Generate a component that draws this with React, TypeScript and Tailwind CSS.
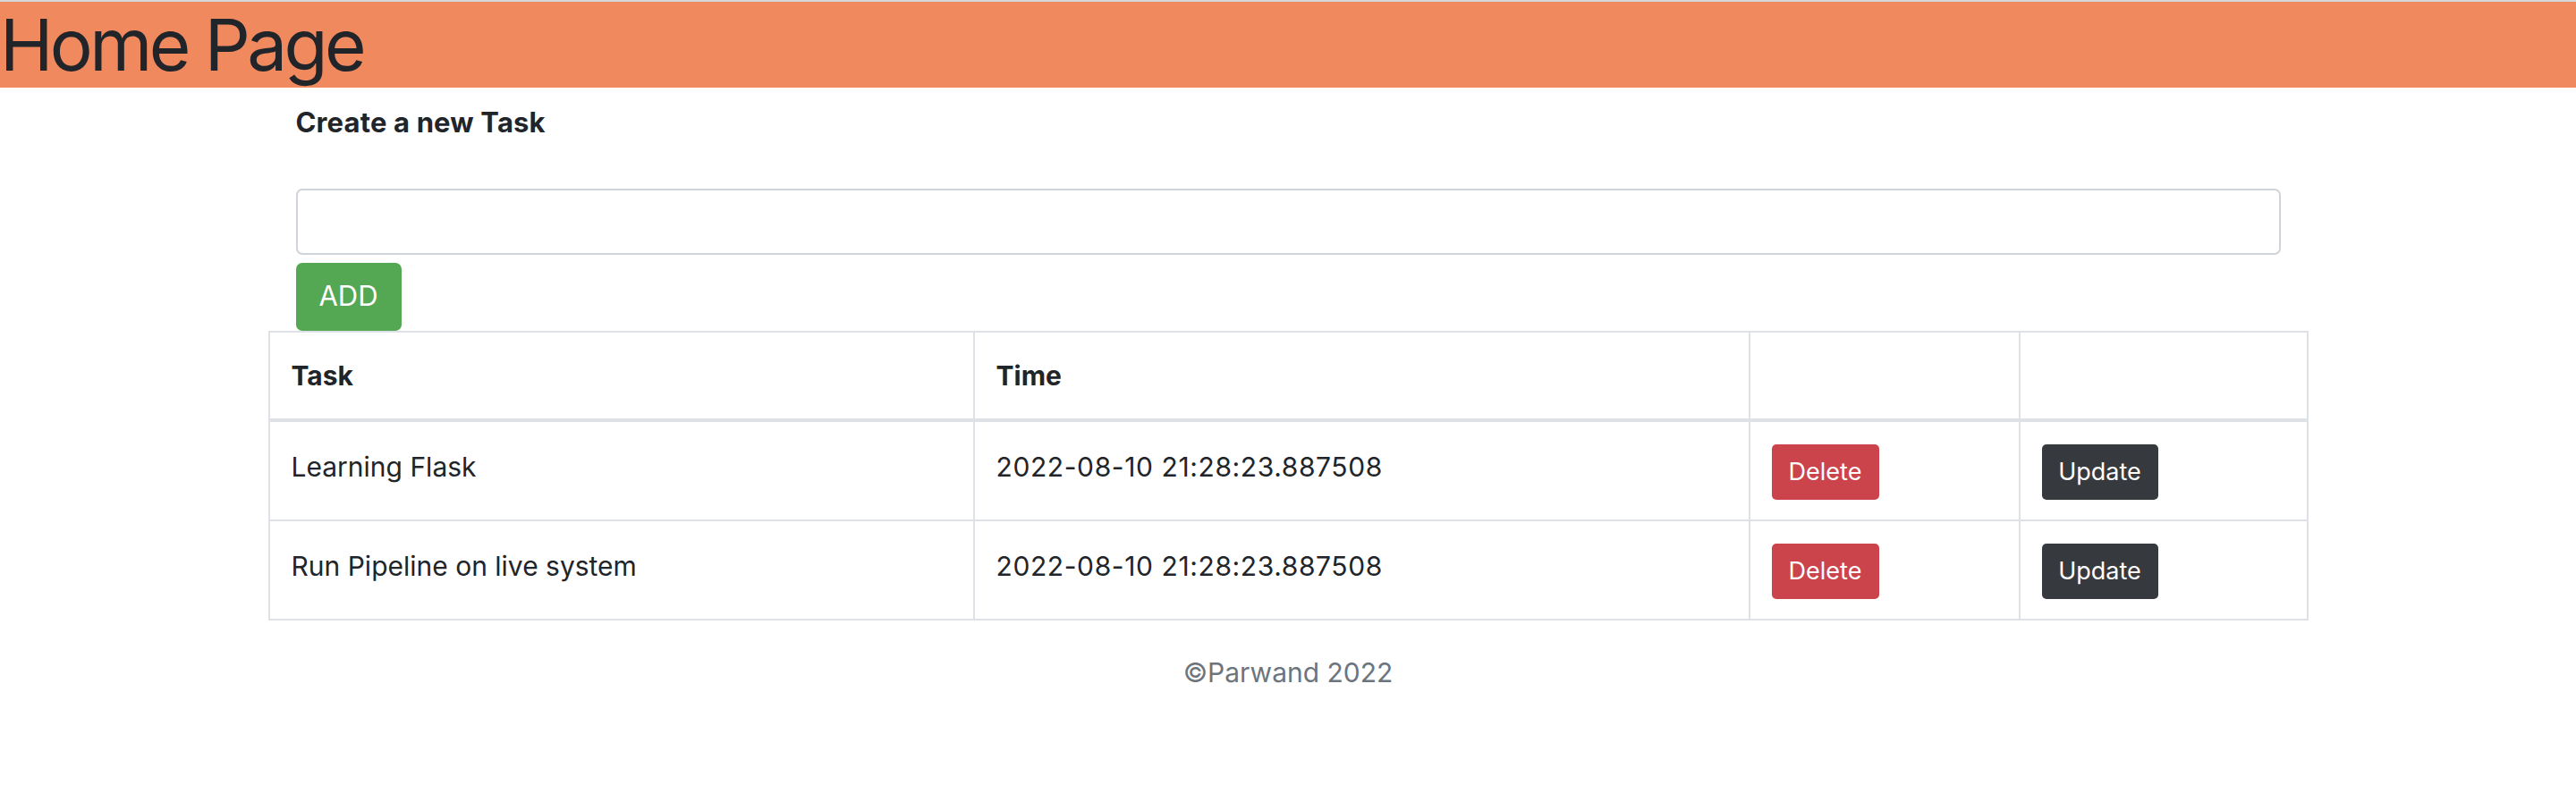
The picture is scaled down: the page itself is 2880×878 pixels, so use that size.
const tasks = [
  { name: "Learning Flask", time: "2022-08-10 21:28:23.887508" },
  { name: "Run Pipeline on live system", time: "2022-08-10 21:28:23.887508" },
];

const cell = "border-r-2 border-[#dee2e6] pl-6";

export default function App() {
  return (
    <div className="min-h-screen bg-white font-['Inter','Noto_Sans',sans-serif] text-[#212529] text-[30px] leading-[1.45]">
      <div className="h-[2px] bg-[#d6d6d6]" />
      <header className="bg-[#f0895e]">
        <h1 className="m-0 text-[80px] leading-[96px] font-normal tracking-[-0.045em]">Home Page</h1>
      </header>

      <main className="w-[2281px] mx-auto">
        <form className="px-[31px] pt-[17px]" onSubmit={(e) => e.preventDefault()}>
          <label className="block font-bold text-[31px] tracking-[0.005em]">Create a new Task</label>
          <input
            type="text"
            className="block mt-[51px] w-full h-[74px] border-2 border-[#ced4da] rounded-[7px] bg-white px-4 outline-none"
          />
          <button className="mt-[9px] w-[118px] h-[76px] rounded-[7px] bg-[#54a753] text-white text-[31px]">
            ADD
          </button>
        </form>

        <div className="grid grid-cols-[788px_867px_302px_322px] border-l-2 border-t-2 border-[#dee2e6]">
          <div className={`${cell} h-[100px] border-b-4 pt-[27px] font-bold`}>Task</div>
          <div className={`${cell} h-[100px] border-b-4 pt-[27px] font-bold`}>Time</div>
          <div className={`${cell} h-[100px] border-b-4`} />
          <div className={`${cell} h-[100px] border-b-4`} />

          {tasks.map((t) => (
            <>
              <div className={`${cell} h-[111px] border-b-2 pt-[29px]`}>{t.name}</div>
              <div className={`${cell} h-[111px] border-b-2 pt-[29px] tracking-[0.02em]`}>{t.time}</div>
              <div className={`${cell} h-[111px] border-b-2 pt-[25px]`}>
                <button className="w-[120px] h-[62px] rounded-[5px] bg-[#cc444b] text-white text-[27px]">Delete</button>
              </div>
              <div className={`${cell} h-[111px] border-b-2 pt-[25px]`}>
                <button className="w-[130px] h-[62px] rounded-[5px] bg-[#363a3e] text-white text-[27px]">Update</button>
              </div>
            </>
          ))}
        </div>
      </main>

      <footer className="mt-[37px] text-center text-[#6c757d]">©Parwand 2022</footer>
    </div>
  );
}
